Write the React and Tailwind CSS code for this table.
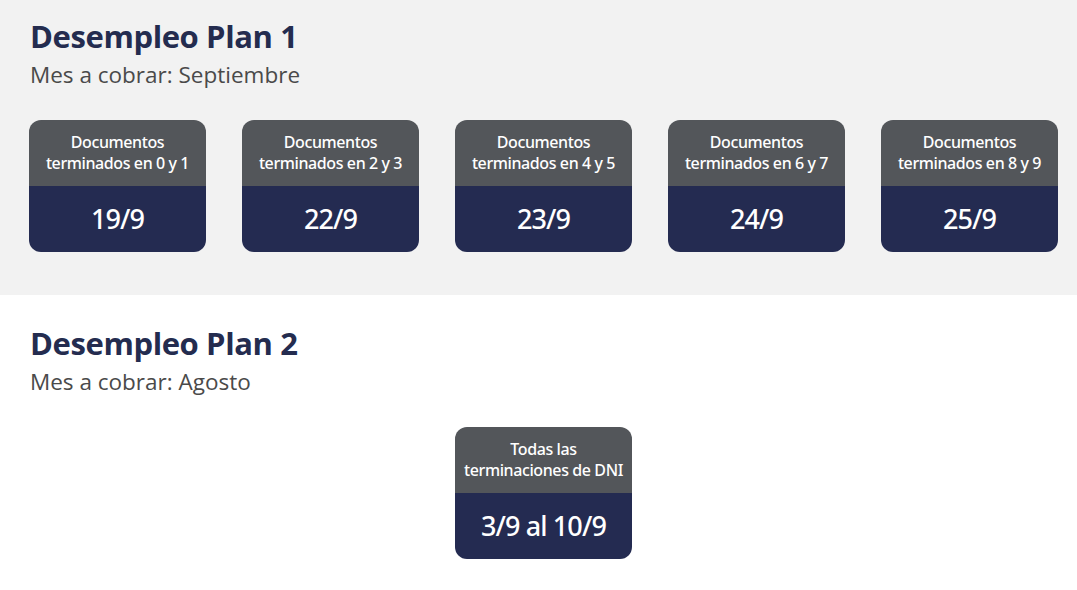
import React from 'react';

const plan1 = [
  { label: 'terminados en 0 y 1', date: '19/9' },
  { label: 'terminados en 2 y 3', date: '22/9' },
  { label: 'terminados en 4 y 5', date: '23/9' },
  { label: 'terminados en 6 y 7', date: '24/9' },
  { label: 'terminados en 8 y 9', date: '25/9' },
];

function Card({ top, bottom, date }) {
  return (
    <div className="w-[177px] h-[132px] rounded-[12px] overflow-hidden flex flex-col font-['Noto_Sans',sans-serif]">
      <div className="h-[66px] pb-[1px] bg-[#53565a] text-white text-[16px] leading-[21px] font-medium flex flex-col items-center justify-center text-center tracking-[-0.4px]">
        <span>{top}</span>
        <span>{bottom}</span>
      </div>
      <div className="flex-1 bg-[#242b51] text-white text-[27px] font-medium flex items-center justify-center tracking-[-0.9px]">
        {date}
      </div>
    </div>
  );
}

function Header({ title, month }) {
  return (
    <div className="pl-[30px]">
      <h2 className="text-[31px] leading-[40px] font-bold text-[#242c4f] tracking-[-0.4px]">{title}</h2>
      <p className="text-[22.5px] leading-[30px] text-[#4a4a4a] mt-[4px]">Mes a cobrar: {month}</p>
    </div>
  );
}

export default function App() {
  return (
    <div className="w-[1077px] h-[590px] bg-white" style={{ fontFamily: '"Open Sans", "Noto Sans", sans-serif' }}>
      <section className="bg-[#f2f2f2] h-[295px] pt-[16px]">
        <Header title="Desempleo Plan 1" month="Septiembre" />
        <div className="flex gap-[36px] pl-[29px] mt-[30px]">
          {plan1.map((c) => (
            <Card key={c.date} top="Documentos" bottom={c.label} date={c.date} />
          ))}
        </div>
      </section>
      <section className="pt-[28px]">
        <Header title="Desempleo Plan 2" month="Agosto" />
        <div className="pl-[455px] mt-[30px]">
          <Card top="Todas las" bottom="terminaciones de DNI" date="3/9 al 10/9" />
        </div>
      </section>
    </div>
  );
}
